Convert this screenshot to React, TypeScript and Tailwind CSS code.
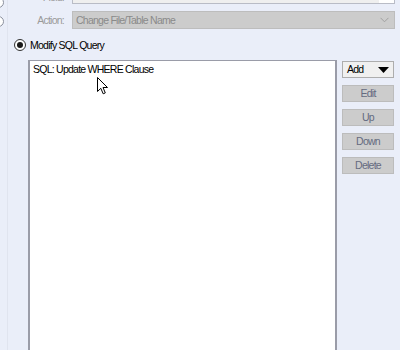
import React from "react";

function Pointer() {
  return (
    <svg width="12" height="18" viewBox="0 0 12 18" className="absolute left-[97px] top-[77px]">
      <path
        d="M0.5 0.5 L0.5 14.5 L3.8 11.3 L6.2 16.8 L8.3 15.9 L6 10.5 L10.5 10.5 Z"
        fill="#ffffff"
        stroke="#000000"
        strokeWidth="1"
        strokeLinejoin="miter"
      />
    </svg>
  );
}

function SideButton({ label }: { label: string }) {
  return (
    <div className="h-[17px] w-[52px] border border-[#bcbcbc] bg-[#cccccc] flex items-center justify-center leading-none text-[#646a80]">
      {label}
    </div>
  );
}

export default function App() {
  return (
    <div
      className="relative w-[400px] h-[350px] overflow-hidden bg-[#eaeef9] text-[10.5px] tracking-[-0.75px]"
      style={{ fontFamily: '"Liberation Sans", Arial, sans-serif' }}
    >
      {/* clipped radios of the group above */}
      <div className="absolute left-[-7px] top-[-3px] w-[11px] h-[11px] rounded-full border border-[#8a8f9c] bg-white" />
      <div className="absolute left-[-7px] top-[16px] w-[11px] h-[11px] rounded-full border border-[#8a8f9c] bg-white" />
      <div className="absolute left-[7px] top-0 bottom-0 w-px bg-[#e0e4ef]" />

      <div className="flex flex-col -mt-[13px]">
        {/* Field row */}
        <div className="flex items-center h-[17px]">
          <div className="w-[64px] text-right text-[#9a9a9a] leading-none pt-[4px]">Field:</div>
          <div className="ml-[8px] w-[323px] h-[17px] border border-[#b9bcc6] bg-white flex flex-col justify-end">
            <div className="h-[3px] w-[306px] bg-[#efefef]" />
          </div>
        </div>

        {/* Action row */}
        <div className="flex items-center h-[18px] mt-[7px]">
          <div className="w-[64px] text-right text-[#9a9a9a] leading-none">Action:</div>
          <div className="ml-[8px] w-[323px] h-[18px] border border-[#bdbdbd] bg-[#cccccc] flex items-center justify-between pl-[3px] pr-[5px] text-[#8a8a8a]">
            <span className="leading-none">Change File/Table Name</span>
            <svg width="9" height="6" viewBox="0 0 9 6">
              <path d="M0.5 0.8 L4.5 4.8 L8.5 0.8" fill="none" stroke="#a0a0a0" strokeWidth="1" />
            </svg>
          </div>
        </div>

        {/* Radio row */}
        <div className="flex items-center h-[12px] mt-[10px] pl-[14px]">
          <div className="w-[12px] h-[12px] rounded-full border border-[#333333] bg-white flex items-center justify-center">
            <div className="w-[6px] h-[6px] rounded-full bg-[#1a1a1a]" />
          </div>
          <span className="ml-[4px] leading-none text-black">Modify SQL Query</span>
        </div>

        {/* List + buttons */}
        <div className="flex mt-[9px] pl-[28px]">
          <div className="w-[309px] h-[300px] border-l-2 border-r-2 border-t border-[#9a9ca8] bg-white pl-[3px] pt-[2px]">
            <div className="leading-[12px] text-black">SQL: Update WHERE Clause</div>
          </div>
          <div className="ml-[5px] mt-[1px] flex flex-col gap-[7px]">
            <div className="h-[17px] w-[52px] border border-[#adadad] bg-[#f0f0f0] flex items-center justify-between pl-[4px] pr-[4px] text-black">
              <span className="leading-none">Add</span>
              <svg width="11" height="6" viewBox="0 0 11 6">
                <path d="M0 0 L11 0 L5.5 6 Z" fill="#000000" />
              </svg>
            </div>
            <SideButton label="Edit" />
            <SideButton label="Up" />
            <SideButton label="Down" />
            <SideButton label="Delete" />
          </div>
        </div>
      </div>

      <Pointer />
    </div>
  );
}
